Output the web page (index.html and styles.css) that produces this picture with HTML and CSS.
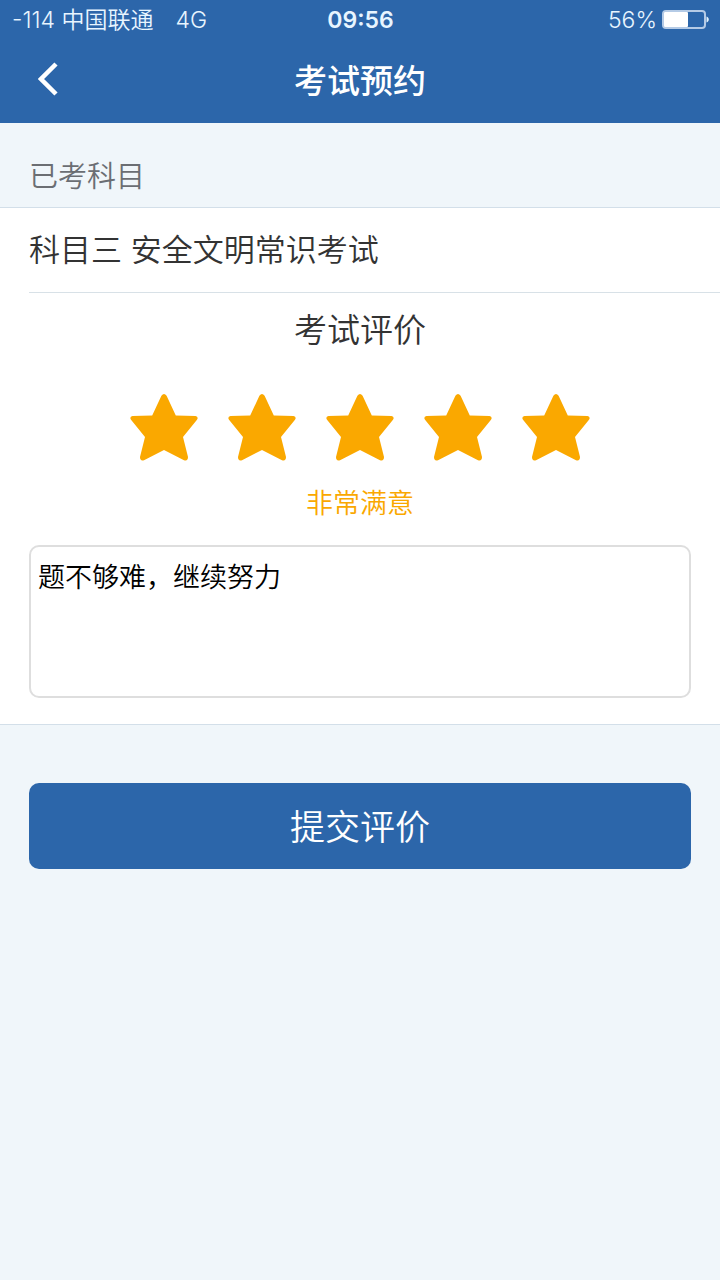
FILE: index.html
```
<!DOCTYPE html>
<html lang="zh-CN">
<head>
    <meta charset="UTF-8">
    <meta name="viewport" content="width=device-width, initial-scale=1.0">
    <title>考试预约</title>
    <link rel="stylesheet" href="styles.css">
</head>
<body>
    <svg class="sprite" aria-hidden="true">
        <symbol id="star" viewBox="0 0 68 68">
            <path d="M31.400 1.800Q34 -1.600 36.600 1.800L45.800 21.600L65.500 22Q69 22.800 66.800 26L53 43L58 63Q58 67.400 54 66.200L34 56L14 66.200Q10 67.400 10 63L15 43L1.200 26Q-1 22.800 2.500 22L22.200 21.600Z" fill="#faa800"/>
        </symbol>
    </svg>

    <header class="header">
        <div class="status-bar">
            <div class="carrier"><span>-114 中国联通</span><span>4G</span></div>
            <div class="clock">09:56</div>
            <div class="power">
                <span>56%</span>
                <svg class="battery" width="47" height="20" viewBox="0 0 47 20">
                    <rect x="1" y="1" width="42" height="17" rx="3" fill="none" stroke="#b5cbe6" stroke-width="2"/>
                    <rect x="2" y="2" width="24" height="15" rx="1" fill="#fff"/>
                    <path d="M44.500 6.500C47.500 7.500 47.500 11.500 44.500 12.500Z" fill="#e3f3fc"/>
                </svg>
            </div>
        </div>
        <nav class="nav-bar">
            <button type="button" class="back" aria-label="返回">
                <svg width="20" height="34" viewBox="0 0 20 34">
                    <path d="M18 2L3 17L18 32" fill="none" stroke="#fff" stroke-width="4.500"/>
                </svg>
            </button>
            <h1 class="nav-title">考试预约</h1>
        </nav>
    </header>

    <form>
        <h2 class="section-label">已考科目</h2>
        <div class="card">
            <div class="subject">科目三 安全文明常识考试</div>
            <h3 class="rate-title">考试评价</h3>
            <div class="stars" role="radiogroup" aria-label="考试评价">
                <label class="star"><input type="radio" name="score" value="1" aria-label="1"><svg><use href="#star"/></svg></label>
                <label class="star"><input type="radio" name="score" value="2" aria-label="2"><svg><use href="#star"/></svg></label>
                <label class="star"><input type="radio" name="score" value="3" aria-label="3"><svg><use href="#star"/></svg></label>
                <label class="star"><input type="radio" name="score" value="4" aria-label="4"><svg><use href="#star"/></svg></label>
                <label class="star"><input type="radio" name="score" value="5" aria-label="5" checked><svg><use href="#star"/></svg></label>
            </div>
            <p class="rate-text">非常满意</p>
            <textarea class="comment" name="comment" aria-label="考试评价">题不够难，继续努力</textarea>
        </div>
        <div class="actions">
            <button type="submit" class="submit">提交评价</button>
        </div>
    </form>
</body>
</html>
```
FILE: styles.css
```
* {
    box-sizing: border-box;
}

body {
    margin: 0;
    min-height: 100vh;
    background-color: #f0f6fa;
    color: #333;
    font-family: Inter, "Noto Sans CJK SC", sans-serif;
    font-weight: 350;
}

h1, h2, h3, p {
    margin: 0;
    font-weight: inherit;
}

.sprite {
    display: none;
}

/* Header */
.header {
    background-color: #2c66aa;
    color: #fff;
}

.status-bar {
    display: grid;
    grid-template-columns: 1fr auto 1fr;
    align-items: center;
    height: 40px;
    padding: 0 11px 0 12px;
    font-size: 23px;
    line-height: 40px;
    color: #e8f5ff;
}

.carrier {
    display: flex;
    gap: 22px;
    white-space: nowrap;
}

.clock {
    font-weight: 600;
}

.power {
    display: flex;
    justify-content: flex-end;
    align-items: center;
    gap: 5px;
}

.nav-bar {
    display: grid;
    grid-template-columns: 96px 1fr 96px;
    height: 83px;
}

.back {
    display: flex;
    align-items: center;
    height: 77px;
    padding: 0 38px;
    border: none;
    background: none;
    cursor: pointer;
}

.nav-title {
    font-size: 33px;
    line-height: 83px;
    font-weight: 500;
    text-align: center;
}

/* Content */
.section-label {
    padding: 34px 29px 10px;
    font-size: 29px;
    line-height: 40px;
    color: #6b6e73;
}

.card {
    padding: 0 29px 26px;
    background-color: #fff;
    border-top: 1px solid #d3dfe9;
    border-bottom: 1px solid #d3dfe9;
}

.subject {
    margin-right: -29px;
    border-bottom: 1px solid #d8e1e7;
    font-size: 31px;
    line-height: 84px;
}

.rate-title {
    padding: 13px 0 40px;
    font-size: 33px;
    line-height: 48px;
    text-align: center;
}

.stars {
    display: flex;
    justify-content: center;
    gap: 30px;
}

.star {
    display: block;
    height: 68px;
    cursor: pointer;
}

.star input {
    position: absolute;
    opacity: 0;
}

.star svg {
    display: block;
    width: 68px;
    height: 68px;
}

.rate-text {
    padding: 22px 0 21px;
    font-size: 27px;
    line-height: 40px;
    text-align: center;
    color: #faa800;
}

.comment {
    display: block;
    width: 100%;
    height: 153px;
    padding: 11px 7px;
    border: 2px solid #dedede;
    border-radius: 10px;
    background-color: #fff;
    color: #000;
    font-family: inherit;
    font-size: 27px;
    font-weight: inherit;
    line-height: 40px;
    resize: none;
}

.actions {
    padding: 58px 29px;
}

.submit {
    display: block;
    width: 100%;
    height: 86px;
    padding: 0 0 3px;
    border: none;
    border-radius: 10px;
    background-color: #2c66aa;
    color: #fff;
    font-family: inherit;
    font-size: 35px;
    font-weight: inherit;
    cursor: pointer;
}
```
